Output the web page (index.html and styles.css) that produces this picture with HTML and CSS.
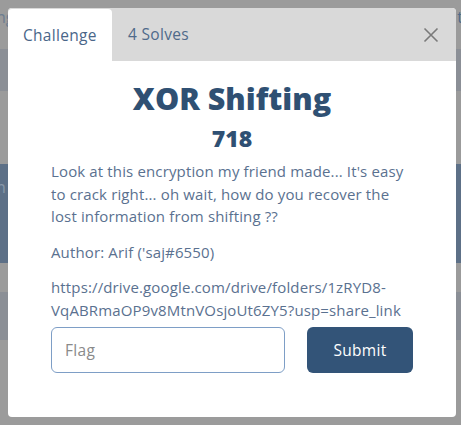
FILE: index.html
```html
<!DOCTYPE html>
<html>
<head>
<meta charset="utf-8">
<link rel="stylesheet" href="styles.css">
</head>
<body>
<div class="page">
  <div class="row row-top"><span class="ghost-l">ng</span><span class="ghost-r">t</span></div>
  <div class="band band-a"></div>
  <div class="gap gap-1"></div>
  <div class="band band-b"><span class="ghost-l ghost-mid">n</span></div>
  <div class="gap gap-2"></div>
  <div class="band band-c"></div>
</div>
<div class="modal">
  <div class="modal-head">
    <div class="tab tab-active">Challenge</div>
    <div class="tab">4 Solves</div>
    <div class="close">
      <svg width="16" height="16" viewBox="0 0 16 16"><path d="M1.5 1.5 L14.5 14.5 M14.5 1.5 L1.5 14.5" stroke="#7a7a7a" stroke-width="1.6" fill="none"/></svg>
    </div>
  </div>
  <div class="modal-body">
    <h2 class="title">XOR Shifting</h2>
    <h3 class="points">718</h3>
    <div class="desc">
      <p>Look at this encryption my friend made... It's easy to crack right... oh wait, how do you recover the lost information from shifting ??</p>
      <p>Author: Arif ('saj#6550)</p>
      <p>https://drive.google.com/drive/folders/1zRYD8-VqABRmaOP9v8MtnVOsjoUt6ZY5?usp=share_link</p>
    </div>
    <div class="form">
      <div class="flag-input">Flag</div>
      <div class="submit">Submit</div>
    </div>
  </div>
</div>
</body>
</html>
```

FILE: styles.css
```css
html, body {
  margin: 0;
  padding: 0;
}
body {
  width: 461px;
  height: 425px;
  overflow: hidden;
  background: #9b9b9b;
  font-family: "Open Sans", sans-serif;
  position: relative;
}
.page {
  display: flex;
  flex-direction: column;
}
.row-top {
  height: 49px;
  display: flex;
  justify-content: space-between;
  color: #6d7d90;
  font-size: 16px;
}
.ghost-l { margin-left: -4px; margin-top: 6px; }
.ghost-r { margin-right: -2px; margin-top: 6px; color: #4f6a88; }
.band-a { height: 42px; background: #8b8f96; }
.gap-1 { height: 73px; }
.band-b { height: 99px; background: #5d7087; color: #8897a8; font-size: 16px; }
.ghost-mid { display: block; margin-top: 12px; }
.gap-2 { height: 29px; }
.band-c { height: 48px; background: #8b8f96; }

.modal {
  position: absolute;
  left: 8px;
  top: 8px;
  width: 448px;
  height: 409px;
  background: #fff;
  border-radius: 4px;
  overflow: hidden;
}
.modal-head {
  display: flex;
  align-items: stretch;
  background: #d9d9d9;
  height: 53px;
}
.tab {
  padding: 0 16px 0 16px;
  display: flex;
  align-items: center;
  font-size: 15.5px;
  letter-spacing: 0.3px;
  color: #4f6a8a;
  padding-bottom: 1px;
}
.tab-active {
  background: #fff;
  margin-top: 1px;
  border-radius: 4px 4px 0 0;
  color: #4a6689;
  padding-left: 15px;
  width: 73px;
}
.close {
  margin-left: auto;
  display: flex;
  align-items: center;
  padding-right: 17px;
}
.modal-body {
  padding: 0 43px 0 43px;
}
.title {
  margin: 17px 0 0;
  text-align: center;
  font-size: 30.5px;
  font-weight: 800;
  color: #2f5073;
  line-height: 40px;
}
.points {
  margin: 3px 0 0;
  text-align: center;
  font-size: 23px;
  font-weight: 800;
  color: #2f5073;
  line-height: 34px;
}
.desc {
  margin-top: 5px;
  color: #5a7190;
  font-size: 15px;
  letter-spacing: 0.14px;
  line-height: 22.5px;
  word-break: break-word;
}
.desc p {
  margin: 0 0 13px;
}
.desc p:last-child {
  margin-bottom: 6px;
}
.form {
  display: flex;
  gap: 22px;
}
.flag-input {
  width: 234px;
  height: 46px;
  box-sizing: border-box;
  border: 1px solid #7e9ec6;
  border-radius: 6px;
  color: #8a8a8a;
  font-size: 15.5px;
  letter-spacing: 0.3px;
  display: flex;
  align-items: center;
  padding-left: 13px;
}
.submit {
  width: 106px;
  height: 46px;
  background: #335478;
  color: #fff;
  border-radius: 6px;
  font-size: 15.5px;
  letter-spacing: 0.3px;
  display: flex;
  align-items: center;
  justify-content: center;
}
```
